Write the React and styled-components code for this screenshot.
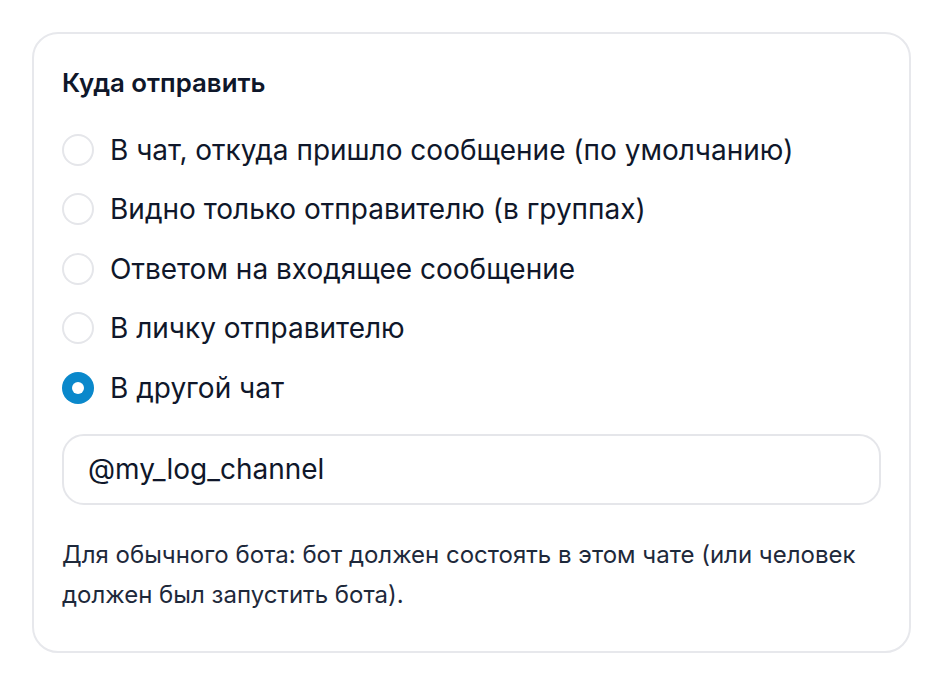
import React, { useState } from "react"
import styled, { createGlobalStyle } from "styled-components"

const Global = createGlobalStyle`
  html, body {
    margin: 0;
    background: #ffffff;
    font-family: Inter, "Noto Sans", sans-serif;
    color: #0f172a;
  }
`

const Page = styled.div`
  padding: 32px;
`

const Card = styled.div`
  width: 879px;
  box-sizing: border-box;
  border: 2px solid #e7e8ec;
  border-radius: 26px;
  padding: 34px 28px 36px 28px;
  background: #fff;
`

const Title = styled.div`
  font-size: 25.8px;
  font-weight: 600;
  line-height: 30px;
  color: #0f172a;
  margin-bottom: 22px;
`

const Options = styled.div`
  display: flex;
  flex-direction: column;
`

const Option = styled.label`
  display: flex;
  align-items: center;
  gap: 16px;
  height: 59.5px;
  cursor: pointer;
  font-size: 28px;
  color: #0f172a;
`

const Radio = styled.span`
  width: 32px;
  height: 32px;
  box-sizing: border-box;
  border-radius: 50%;
  flex-shrink: 0;
  display: flex;
  align-items: center;
  justify-content: center;
  border: ${(p) => (p.checked ? "none" : "2px solid #e5e6ea")};
  background: ${(p) => (p.checked ? "#0a88cb" : "#fff")};
  &::after {
    content: "";
    display: ${(p) => (p.checked ? "block" : "none")};
    width: 12px;
    height: 12px;
    border-radius: 50%;
    background: #fff;
  }
`

const Input = styled.input`
  display: block;
  width: 100%;
  box-sizing: border-box;
  height: 71px;
  margin-top: 16px;
  border: 2px solid #e5e6ea;
  border-radius: 22px;
  padding: 0 24px;
  font-family: Inter, "Noto Sans", sans-serif;
  font-size: 28px;
  color: #0f172a;
  outline: none;
`

const Hint = styled.p`
  margin: 30px 0 0 0;
  font-size: 24px;
  line-height: 40px;
  color: #1e293b;
`

const options = [
  "В чат, откуда пришло сообщение (по умолчанию)",
  "Видно только отправителю (в группах)",
  "Ответом на входящее сообщение",
  "В личку отправителю",
  "В другой чат",
]

export default function App() {
  const [selected, setSelected] = useState(4)
  const [value, setValue] = useState("@my_log_channel")

  return (
    <>
      <Global />
      <Page>
        <Card>
          <Title>Куда отправить</Title>
          <Options>
            {options.map((o, i) => (
              <Option key={i} onClick={() => setSelected(i)}>
                <Radio checked={selected === i} />
                {o}
              </Option>
            ))}
          </Options>
          <Input value={value} onChange={(e) => setValue(e.target.value)} />
          <Hint>
            Для обычного бота: бот должен состоять в этом чате (или человек
            должен был запустить бота).
          </Hint>
        </Card>
      </Page>
    </>
  )
}
